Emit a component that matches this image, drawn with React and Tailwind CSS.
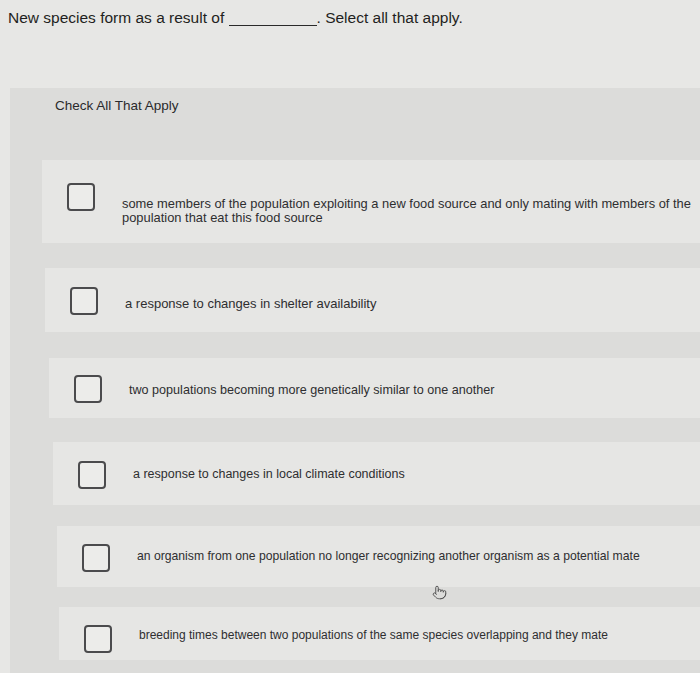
import { Pointer } from "lucide-react";

const options = [
  {
    text: "some members of the population exploiting a new food source and only mating with members of the population that eat this food source",
    row: "ml-[32px] mt-[45px] h-[83px] pt-[23px]",
    label: "mt-[14px] w-[572px] text-[12.9px] leading-[14px]",
  },
  {
    text: "a response to changes in shelter availability",
    row: "ml-[35px] mt-[25px] h-[64px] pt-[19px]",
    label: "mt-[9px] text-[13px] leading-[15px]",
  },
  {
    text: "two populations becoming more genetically similar to one another",
    row: "ml-[39px] mt-[26px] h-[60px] pt-[17px]",
    label: "mt-[8px] text-[12.6px] leading-[15px]",
  },
  {
    text: "a response to changes in local climate conditions",
    row: "ml-[43px] mt-[24px] h-[63px] pt-[19px]",
    label: "mt-[6px] text-[12.5px] leading-[15px]",
  },
  {
    text: "an organism from one population no longer recognizing another organism as a potential mate",
    row: "ml-[47px] mt-[21px] h-[61px] pt-[18px]",
    label: "mt-[5px] text-[12.2px] leading-[15px]",
  },
  {
    text: "breeding times between two populations of the same species overlapping and they mate",
    row: "ml-[49px] mt-[20px] h-[53px] pt-[18px]",
    label: "mt-[3px] text-[12px] leading-[15px]",
  },
];

function Option({ o }) {
  return (
    <div className={`flex items-start bg-[#e6e6e4] pl-[25px] ${o.row}`}>
      <div className="w-[28px] h-[28px] shrink-0 rounded-[4px] border-2 border-[#4b4b4d] bg-[#ececea]"></div>
      <p className={`ml-[27px] text-[#2e2e30] ${o.label}`}>{o.text}</p>
    </div>
  );
}

export default function App() {
  return (
    <div
      className="relative w-[700px] h-[673px] overflow-hidden bg-[#e7e7e5]"
      style={{ fontFamily: '"Liberation Sans", Arial, sans-serif' }}
    >
      <div className="pl-[8px] pt-[8px] h-[88px] text-[15.5px] leading-[20px] text-[#1f1f21]">
        New species form as a result of{" "}
        <span className="inline-block w-[88px] border-b border-[#2a2a2a] align-[-3px]"></span>. Select all
        that apply.
      </div>

      <div className="ml-[10px] h-[585px] bg-[#dcdcda] pt-[9px]">
        <div className="pl-[45px] text-[13.5px] leading-[18px] text-[#2a2a2c]">Check All That Apply</div>
        <div className="flex flex-col">
          {options.map((o, i) => (
            <Option key={i} o={o} />
          ))}
        </div>
      </div>

      <Pointer className="absolute left-[432px] top-[585px] w-[15px] h-[15px] text-[#555]" strokeWidth={1.6} />
    </div>
  );
}
